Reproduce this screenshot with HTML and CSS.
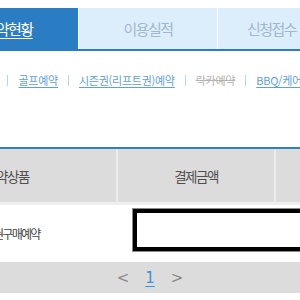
FILE: index.html
```html
<!DOCTYPE html>
<html lang="ko">
<head>
    <meta charset="UTF-8">
    <meta name="viewport" content="width=device-width, initial-scale=1.0">
    <title>예약현황</title>
    <link rel="stylesheet" href="styles.css">
</head>
<body>
    <div class="tabs">
        <a class="tab tab-on" href="#">예약현황</a>
        <a class="tab" href="#">이용실적</a>
        <a class="tab tab-last" href="#">신청접수</a>
    </div>

    <div class="links">
        <a href="#">콘도예약</a>
        <span class="sep"></span>
        <a href="#">골프예약</a>
        <span class="sep"></span>
        <a href="#">시즌권(리프트권)예약</a>
        <span class="sep"></span>
        <span class="off">락카예약</span>
        <span class="sep"></span>
        <a href="#">BBQ/케어예약</a>
    </div>

    <div class="grid grid-head">
        <div class="head">예약상품</div>
        <div class="head">결제금액</div>
        <div class="head">상태</div>
    </div>
    <div class="grid row">
        <div class="cell">시즌권구매예약</div>
        <div class="cell"></div>
        <div class="cell"></div>
        <div class="mask"></div>
    </div>

    <div class="paging">
        <a class="arrow" href="#">&lt;</a>
        <a class="page" href="#">1</a>
        <a class="arrow" href="#">&gt;</a>
    </div>
</body>
</html>
```

FILE: styles.css
```css
body {
    margin: 0;
    width: 300px;
    overflow: hidden;
    font-family: "Noto Sans CJK KR", "Noto Sans", sans-serif;
    background: #fff;
}

a {
    text-decoration: none;
}

.tabs {
    display: flex;
    margin: 8px 0 0 -62px;
    height: 41px;
    border-bottom: 2px solid #2a7dc2;
}

.tab {
    flex: none;
    width: 139px;
    display: flex;
    align-items: center;
    justify-content: center;
    font-size: 15px;
    letter-spacing: -1.5px;
    color: #a3b8cc;
    background: #dcedfb;
    border-left: 1px solid #fff;
    box-sizing: border-box;
}

.tab-on {
    width: 140px;
    border-left: none;
    background: #2a7dc2;
    color: #fff;
    text-decoration: underline;
    text-underline-offset: 3px;
}

.tab-last {
    width: 108px;
}

.links {
    display: flex;
    align-items: center;
    gap: 10px;
    margin: 21px 0 0 -42px;
    height: 16px;
    font-size: 11px;
    letter-spacing: -0.25px;
    white-space: nowrap;
}

.links a {
    color: #5f9fda;
    text-decoration: underline;
    text-underline-offset: 2px;
}

.links .off {
    color: #b3b3b3;
    text-decoration: line-through;
}

.sep {
    flex: none;
    width: 1px;
    height: 11px;
    background: #b8d3ec;
}

.grid {
    display: grid;
    grid-template-columns: 218px 156px 124px;
    column-gap: 2px;
    margin-left: -102px;
    width: 502px;
}

.grid-head {
    margin-top: 59px;
    background: #ececec;
    border-top: 2px solid #2f80c4;
    border-bottom: 3px solid #efefef;
}

.head {
    height: 53px;
    display: flex;
    align-items: center;
    justify-content: center;
    background: #dcdcdc;
    font-size: 13.5px;
    letter-spacing: -1.5px;
    color: #505050;
}

.row {
    position: relative;
    height: 57px;
}

.cell {
    display: flex;
    align-items: center;
    justify-content: center;
    font-size: 12px;
    letter-spacing: -1.7px;
    color: #444;
}

.mask {
    position: absolute;
    left: 235px;
    top: 4px;
    width: 240px;
    height: 42px;
    box-sizing: border-box;
    border: 4px solid #000;
    outline: 1px solid #888;
}

.paging {
    display: flex;
    align-items: center;
    justify-content: center;
    gap: 16px;
    height: 31px;
    background: #dcdcdc;
    font-size: 15px;
    font-family: "DejaVu Sans", sans-serif;
}

.arrow {
    color: #8a8a8a;
}

.page {
    color: #3b91d8;
    text-decoration: underline;
    text-underline-offset: 3px;
}
```
